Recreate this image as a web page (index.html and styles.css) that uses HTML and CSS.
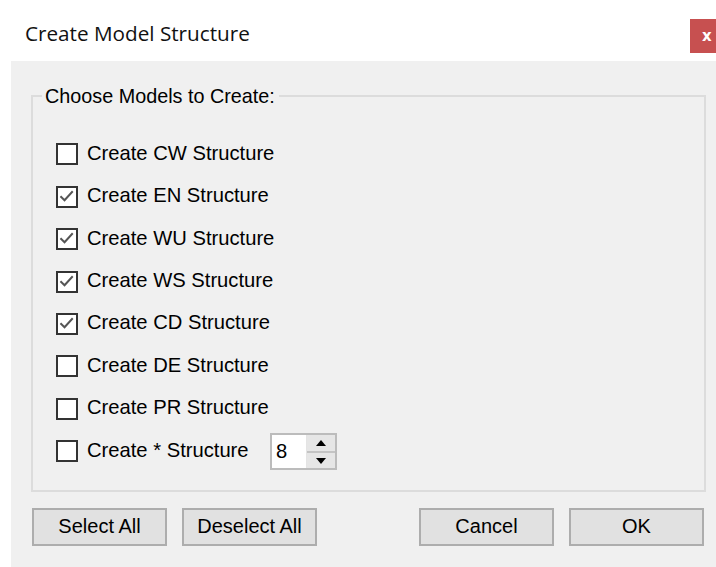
FILE: index.html
```html
<!DOCTYPE html>
<html lang="en">
<head>
<meta charset="utf-8">
<title>Create Model Structure</title>
<link rel="stylesheet" href="styles.css">
</head>
<body>
<div class="window">
  <div class="titlebar">
    <span class="title">Create Model Structure</span>
    <button class="close" type="button">x</button>
  </div>
  <div class="panel">
    <div class="group">
      <span class="legend">Choose Models to Create:</span>
      <div class="rows">
        <label class="row"><span class="box"></span><span class="text">Create CW Structure</span></label>
        <label class="row"><span class="box checked"><svg viewBox="0 0 22 22"><polyline points="3,10 8,15 18,4"/></svg></span><span class="text">Create EN Structure</span></label>
        <label class="row"><span class="box checked"><svg viewBox="0 0 22 22"><polyline points="3,10 8,15 18,4"/></svg></span><span class="text">Create WU Structure</span></label>
        <label class="row"><span class="box checked"><svg viewBox="0 0 22 22"><polyline points="3,10 8,15 18,4"/></svg></span><span class="text">Create WS Structure</span></label>
        <label class="row"><span class="box checked"><svg viewBox="0 0 22 22"><polyline points="3,10 8,15 18,4"/></svg></span><span class="text">Create CD Structure</span></label>
        <label class="row"><span class="box"></span><span class="text">Create DE Structure</span></label>
        <label class="row"><span class="box"></span><span class="text">Create PR Structure</span></label>
        <div class="row">
          <span class="box"></span><span class="text star">Create * Structure</span>
          <span class="spinner">
            <span class="value">8</span>
            <span class="arrows">
              <span class="arrow up"><svg viewBox="0 0 10 6"><polygon points="5,0 10,6 0,6"/></svg></span>
              <span class="arrow down"><svg viewBox="0 0 10 6"><polygon points="0,0 10,0 5,6"/></svg></span>
            </span>
          </span>
        </div>
      </div>
    </div>
    <div class="buttons">
      <button class="btn" type="button">Select All</button>
      <button class="btn" type="button">Deselect All</button>
      <span class="spacer"></span>
      <button class="btn" type="button">Cancel</button>
      <button class="btn" type="button">OK</button>
    </div>
  </div>
</div>
</body>
</html>
```
FILE: styles.css
```css
html, body {
  margin: 0;
  padding: 0;
  background: #ffffff;
}

.window {
  width: 716px;
  height: 567px;
  display: flex;
  flex-direction: column;
  font-family: "Liberation Sans", Arial, sans-serif;
  color: #000;
}

/* title bar */
.titlebar {
  height: 61px;
  display: flex;
  justify-content: space-between;
  align-items: flex-start;
  padding-left: 25px;
  box-sizing: border-box;
}

.title {
  font-family: "Open Sans", "Noto Sans", sans-serif;
  font-size: 20.7px;
  line-height: 28px;
  margin-top: 19px;
  color: #111;
}

.close {
  width: 26px;
  height: 34px;
  margin-top: 19px;
  padding: 0 0 0 12px;
  border: none;
  background: #c75050;
  color: #fff;
  font-family: "DejaVu Sans", sans-serif;
  font-weight: bold;
  font-size: 15px;
  text-align: left;
  cursor: default;
}

/* client area */
.panel {
  flex: 1;
  margin-left: 11px;
  background: #f0f0f0;
  padding: 34px 10px 0 20px;
  box-sizing: border-box;
}

.group {
  height: 397px;
  border: 2px solid #dcdcdc;
  box-sizing: border-box;
  padding: 0 0 0 23px;
}

.legend {
  display: inline-block;
  margin: -13px 0 0 -14px;
  padding: 0 4px 0 3px;
  background: #f0f0f0;
  font-size: 19.8px;
  line-height: 24px;
  vertical-align: top;
}

.rows {
  margin-top: 18px;
  display: flex;
  flex-direction: column;
}

.row {
  height: 42.45px;
  display: flex;
  align-items: center;
  font-size: 20.2px;
}

.box {
  width: 22px;
  height: 22px;
  box-sizing: border-box;
  border: 2px solid #333;
  background: #fff;
  flex: none;
  display: flex;
}

.box svg {
  width: 100%;
  height: 100%;
}

.box polyline {
  fill: none;
  stroke: #555;
  stroke-width: 2.4;
}

.text {
  margin-left: 9px;
  margin-top: -2px;
}

.star {
  width: 183px;
}

/* numeric up/down */
.spinner {
  width: 67px;
  height: 37px;
  box-sizing: border-box;
  border: 2px solid #bcbcbc;
  background: #fff;
  display: flex;
  justify-content: space-between;
  margin-top: 1px;
}

.value {
  padding-left: 4px;
  line-height: 33px;
  font-size: 20.2px;
}

.arrows {
  width: 28px;
  display: flex;
  flex-direction: column;
  border-left: 1px solid #e4e4e4;
  background: #e6e6e6;
}

.arrow {
  flex: 1;
  display: flex;
  align-items: center;
  justify-content: center;
}

.arrow.up {
  border-bottom: 2px solid #c4c4c4;
}

.arrow svg {
  width: 10px;
  height: 6px;
}

.arrow polygon {
  fill: #000;
}

/* dialog buttons */
.buttons {
  display: flex;
  margin-top: 16px;
  margin-left: 1px;
}

.btn {
  width: 135px;
  height: 38px;
  box-sizing: border-box;
  border: 2px solid #adadad;
  background: #e1e1e1;
  font-family: "Liberation Sans", Arial, sans-serif;
  font-size: 20px;
  color: #000;
  padding: 0 0 2px;
  margin-right: 15px;
}

.btn:last-child {
  margin-right: 0;
}

.spacer {
  width: 87px;
}
```
